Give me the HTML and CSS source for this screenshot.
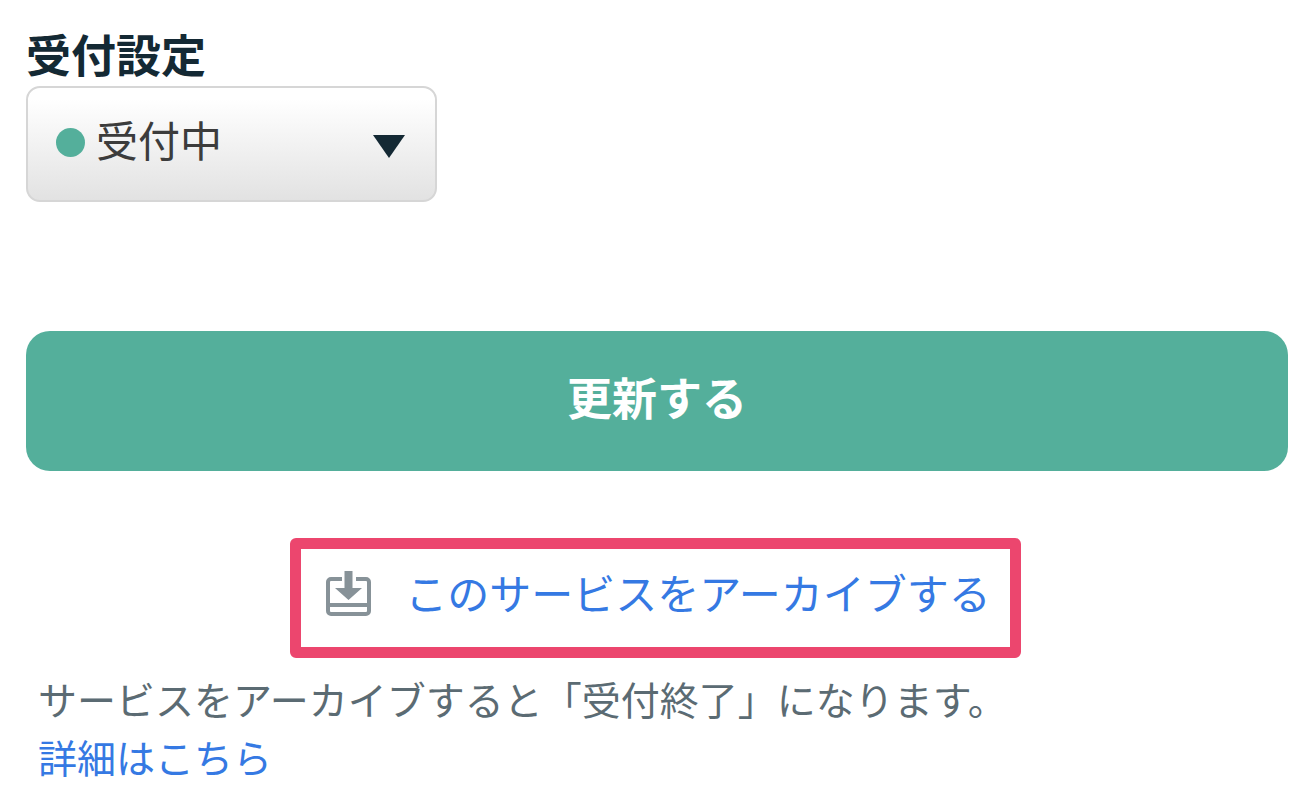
FILE: index.html
```
<!DOCTYPE html>
<html lang="ja">
<head>
  <meta charset="UTF-8">
  <meta name="viewport" content="width=device-width, initial-scale=1.0">
  <title>受付設定</title>
  <link rel="stylesheet" href="styles.css">
</head>
<body>
  <form class="settings">
    <label class="label" for="status">受付設定</label>
    <div class="select">
      <select id="status" class="select-box">
        <option selected>受付中</option>
        <option>受付終了</option>
      </select>
      <span class="dot"></span>
      <svg class="arrow" viewBox="0 0 32 23" aria-hidden="true">
        <path d="M0 0h32L16 23z" fill="#142934"/>
      </svg>
    </div>
    <button class="button" type="button">更新する</button>
  </form>

  <div class="archive">
    <a class="archive-link" href="#">
      <svg class="archive-icon" viewBox="0 -2 48 48" aria-hidden="true">
        <path d="M17 9H6a3 3 0 0 0-3 3v29a3 3 0 0 0 3 3h35a3 3 0 0 0 3-3V12a3 3 0 0 0-3-3H31M3 35h41" fill="none" stroke="#879298" stroke-width="4"/>
        <path d="M19.5 1h8v17H37L23.500 30 10 18h9.500z" fill="#879298"/>
      </svg>
      <span>このサービスをアーカイブする</span>
    </a>
  </div>

  <p class="note">
    サービスをアーカイブすると「受付終了」になります。<br>
    <a href="#">詳細はこちら</a>
  </p>
</body>
</html>
```
FILE: styles.css
```
* {
  box-sizing: border-box;
}
body {
  margin: 0;
  padding: 24px 16px 20px 26px;
  background-color: #fff;
  color: #142934;
  font-family: "Noto Sans CJK JP", sans-serif;
}
a {
  color: #3579e3;
  text-decoration: none;
}
.settings {
  display: flex;
  flex-direction: column;
  align-items: flex-start;
}
.label {
  margin-bottom: 2px;
  font-size: 45px;
  font-weight: bold;
  line-height: 60px;
}
.select {
  position: relative;
  width: 411px;
  max-width: 100%;
}
.select-box {
  appearance: none;
  display: block;
  width: 100%;
  padding: 22px 60px 32px 68px;
  border: 2px solid #d6d6d6;
  border-radius: 14px;
  background: linear-gradient(#fff 10%, #e2e2e2);
  color: #3c3c3c;
  font-family: inherit;
  font-size: 42px;
  line-height: 58px;
}
.dot {
  position: absolute;
  top: 42px;
  left: 30px;
  width: 29px;
  height: 29px;
  border-radius: 50%;
  background-color: #54af9b;
  pointer-events: none;
}
.arrow {
  position: absolute;
  top: 49px;
  right: 32px;
  width: 32px;
  height: 23px;
  pointer-events: none;
}
.button {
  width: 100%;
  margin-top: 129px;
  padding: 36px 20px 44px;
  border: none;
  border-radius: 24px;
  background-color: #54af9b;
  color: #fff;
  font-family: inherit;
  font-size: 45px;
  font-weight: bold;
  line-height: 60px;
  cursor: pointer;
}
.archive {
  display: flex;
  justify-content: center;
  margin-top: 67px;
  padding-right: 3px;
}
.archive-link {
  display: flex;
  align-items: center;
  gap: 32px;
  padding: 14px 19px 26px 24px;
  border: 11px solid #ec466e;
  border-radius: 6px;
  font-size: 42px;
  line-height: 58px;
}
.archive-icon {
  width: 48px;
  height: 48px;
}
.note {
  margin: 11px 0 0;
  padding-left: 12px;
  color: #5b6b73;
  font-size: 39px;
  line-height: 58px;
}
```
